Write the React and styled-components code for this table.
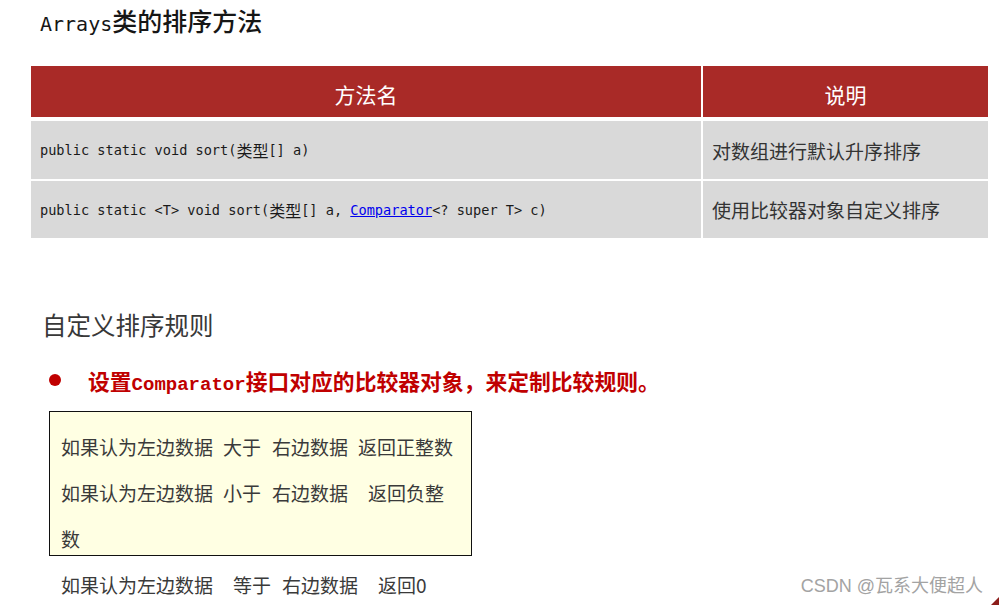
import styled, { createGlobalStyle } from "styled-components";

const GlobalStyle = createGlobalStyle`
  html, body {
    margin: 0;
    padding: 0;
    background: #fff;
  }
  body {
    font-family: "Noto Sans CJK SC", sans-serif;
  }
`;

const rules = [
  [["如果认为左边数据", 0], ["大于", 10], ["右边数据", 11], ["返回正整数", 10]],
  [["如果认为左边数据", 0], ["小于", 10], ["右边数据", 11], ["返回负整", 20]],
  [["数", 0]],
];

const equalRule = [["如果认为左边数据", 0], ["等于", 20], ["右边数据", 11], ["返回0", 20]];

const App = () => {
  return (
    <Page>
      <GlobalStyle />
      <Title>
        Arrays<Han $size={25}>类的排序方法</Han>
      </Title>

      <Table>
        <HeadCell>方法名</HeadCell>
        <HeadCell>说明</HeadCell>

        <CodeCell $h={58}>
          public static void sort(<Han $size={16}>类型</Han>[] a)
        </CodeCell>
        <DescCell $h={58}>对数组进行默认升序排序</DescCell>

        <CodeCell $h={57}>
          public static &lt;T&gt; void sort(<Han $size={16}>类型</Han>[] a,{" "}
          <Link href="#">Comparator</Link>&lt;? super T&gt; c)
        </CodeCell>
        <DescCell $h={57}>使用比较器对象自定义排序</DescCell>
      </Table>

      <Heading>自定义排序规则</Heading>

      <Bullet>
        <Dot />
        <BulletText>
          设置<Mono>Comparator</Mono>接口对应的比较器对象，来定制比较规则。
        </BulletText>
      </Bullet>

      <NoteBox>
        {rules.map((line, i) => (
          <RuleLine key={i}>
            {line.map(([text, gap], j) => (
              <Seg key={j} $gap={gap}>
                {text}
              </Seg>
            ))}
          </RuleLine>
        ))}
      </NoteBox>

      <PlainLine>
        {equalRule.map(([text, gap], j) => (
          <Seg key={j} $gap={gap}>
            {text}
          </Seg>
        ))}
      </PlainLine>

      <Watermark>CSDN @瓦系大便超人</Watermark>
      <Corner viewBox="0 0 10 8">
        <polygon points="10,0 10,8 2,8" fill="#8c1d1a" />
      </Corner>
    </Page>
  );
};

export default App;

const Page = styled.div`
  position: relative;
  width: 999px;
  height: 605px;
  overflow: hidden;
  padding-left: 31px;
  box-sizing: border-box;
`;

const Han = styled.span`
  font-family: "Noto Sans CJK SC", sans-serif;
  font-size: ${({ $size }) => $size}px;
`;

const Title = styled.div`
  margin-left: 9px;
  height: 40px;
  line-height: 40px;
  font-family: "DejaVu Sans Mono", monospace;
  font-size: 20px;
  color: #161616;
  font-weight: 500;
`;

const Table = styled.div`
  margin-top: 26px;
  width: 957px;
  display: grid;
  grid-template-columns: 670px 285px;
  column-gap: 2px;
  row-gap: 2px;
`;

const HeadCell = styled.div`
  height: 51px;
  margin-bottom: 2px;
  box-sizing: border-box;
  padding-top: 5px;
  background: #a92a27;
  color: #fff;
  font-size: 21px;
  display: flex;
  align-items: center;
  justify-content: center;
`;

const CodeCell = styled.div`
  height: ${({ $h }) => $h}px;
  background: #d9d9d9;
  padding-left: 9px;
  display: flex;
  align-items: center;
  white-space: pre;
  font-family: "DejaVu Sans Mono", monospace;
  font-size: 13.6px;
  color: #1a1a1a;
`;

const DescCell = styled.div`
  height: ${({ $h }) => $h}px;
  background: #d9d9d9;
  padding-left: 9px;
  display: flex;
  align-items: center;
  font-size: 19px;
  color: #333;
`;

const Link = styled.a`
  color: #0000ee;
  text-decoration: underline;
`;

const Heading = styled.div`
  margin-top: 67px;
  margin-left: 11px;
  height: 40px;
  line-height: 40px;
  font-size: 24.5px;
  color: #383838;
`;

const Bullet = styled.div`
  margin-top: 15px;
  height: 40px;
  display: flex;
  align-items: center;
`;

const Dot = styled.span`
  width: 12px;
  height: 12px;
  margin-left: 18px;
  border-radius: 50%;
  background: #c00000;
  flex-shrink: 0;
`;

const BulletText = styled.span`
  margin-left: 27px;
  font-size: 21.8px;
  font-weight: 700;
  color: #c00000;
  white-space: nowrap;
`;

const Mono = styled.span`
  font-family: "Liberation Mono", monospace;
  font-size: 19px;
`;

const NoteBox = styled.div`
  margin-top: 11px;
  margin-left: 18px;
  width: 423px;
  height: 145px;
  box-sizing: border-box;
  border: 1px solid #111;
  background: #ffffe3;
  padding: 12px 0 0 11px;
`;

const RuleLine = styled.div`
  height: 46px;
  line-height: 46px;
  font-size: 19px;
  color: #3a3a3a;
  white-space: nowrap;
`;

const PlainLine = styled(RuleLine)`
  margin-top: 6px;
  margin-left: 30px;
`;

const Seg = styled.span`
  display: inline-block;
  margin-left: ${({ $gap }) => $gap}px;
`;

const Watermark = styled.div`
  position: absolute;
  right: 16px;
  bottom: 8px;
  font-family: "Liberation Sans", "Noto Sans CJK SC", sans-serif;
  font-size: 18px;
  color: #a3a3a3;
`;

const Corner = styled.svg`
  position: absolute;
  right: 0;
  bottom: 0;
  width: 10px;
  height: 8px;
`;
